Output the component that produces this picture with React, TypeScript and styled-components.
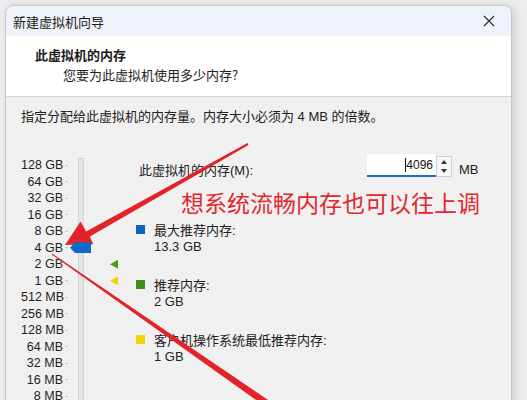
import styled, { createGlobalStyle } from "styled-components";

const GlobalStyle = createGlobalStyle`
  html, body {
    margin: 0;
    padding: 0;
    background: #ededed;
    overflow: hidden;
  }
  body {
    font-family: "Liberation Sans", "Noto Sans CJK SC", sans-serif;
    color: #1b1b1b;
  }
`;

const scaleLabels = [
  "128 GB",
  "64 GB",
  "32 GB",
  "16 GB",
  "8 GB",
  "4 GB",
  "2 GB",
  "1 GB",
  "512 MB",
  "256 MB",
  "128 MB",
  "64 MB",
  "32 MB",
  "16 MB",
  "8 MB",
];

const recommendations = [
  { color: "#0b65b8", label: "最大推荐内存:", value: "13.3 GB" },
  { color: "#3f8f1f", label: "推荐内存:", value: "2 GB" },
  { color: "#f5d400", label: "客户机操作系统最低推荐内存:", value: "1 GB" },
];

const App = () => {
  return (
    <>
      <GlobalStyle />
      <Page>
        <Window>
          <TitleBar>
            <Title>新建虚拟机向导</Title>
            <CloseButton aria-label="关闭">
              <svg width="12" height="12" viewBox="0 0 12 12">
                <path d="M1 1 L11 11 M11 1 L1 11" stroke="#2a2a2a" strokeWidth="1.1" />
              </svg>
            </CloseButton>
          </TitleBar>
          <Header>
            <HeaderTitle>此虚拟机的内存</HeaderTitle>
            <HeaderSub>您要为此虚拟机使用多少内存?</HeaderSub>
          </Header>
          <Panel>
            <Instruction>指定分配给此虚拟机的内存量。内存大小必须为 4 MB 的倍数。</Instruction>
            <Body>
              <Scale>
                {scaleLabels.map((l, i) => (
                  <ScaleLabel key={l} style={{ gridRow: i + 1 }}>
                    {l}
                  </ScaleLabel>
                ))}
                {scaleLabels.map((l, i) => (
                  <Tick key={"t" + l} style={{ gridRow: i + 1 }} />
                ))}
                <Track />
                <Thumb />
                <Marker $color="#4a9a24" $row={7} />
                <Marker $color="#f2d200" $row={8} />
              </Scale>
              <Info>
                <InputRow>
                  <FieldLabel>此虚拟机的内存(M):</FieldLabel>
                  <SpinBox>
                    <NumberField>
                      <Caret />
                      4096
                    </NumberField>
                    <Spinner>
                      <SpinHalf>
                        <Arrow $up />
                      </SpinHalf>
                      <SpinHalf>
                        <Arrow />
                      </SpinHalf>
                    </Spinner>
                  </SpinBox>
                  <Unit>MB</Unit>
                </InputRow>
                <Annotation>想系统流畅内存也可以往上调</Annotation>
                {recommendations.map((r) => (
                  <Entry key={r.label}>
                    <EntryHead>
                      <Swatch $color={r.color} />
                      <EntryLabel>{r.label}</EntryLabel>
                    </EntryHead>
                    <EntryValue>{r.value}</EntryValue>
                  </Entry>
                ))}
              </Info>
            </Body>
          </Panel>
        </Window>
        <Overlay width="527" height="400" viewBox="0 0 527 400">
          <polygon
            points="65,245 80.6,221.5 86.1,231.5 247.5,143.1 248.5,144.9 89.9,236.5 93.2,244.3"
            fill="#e3232b"
          />
          <polygon points="51.7,254.4 52.3,253.6 277,406 273,412" fill="#e3232b" />
        </Overlay>
      </Page>
    </>
  );
};

const Page = styled.div`
  position: relative;
  width: 527px;
  height: 400px;
  overflow: hidden;
  padding: 5px 0 0 5px;
  box-sizing: border-box;
`;

const Window = styled.div`
  width: 507px;
  height: 420px;
  box-sizing: border-box;
  border: 1px solid #c6c6c6;
  border-radius: 8px 8px 0 0;
  overflow: hidden;
  background: #f0f0f0;
  box-shadow: 3px 0 8px rgba(0, 0, 0, 0.12);
`;

const TitleBar = styled.div`
  height: 30px;
  display: flex;
  align-items: center;
  justify-content: space-between;
  padding: 0 8px 0 7px;
  background: #eef3f9;
`;

const Title = styled.div`
  font-family: "Noto Sans CJK SC", sans-serif;
  font-size: 13px;
  color: #1a1a1a;
`;

const CloseButton = styled.div`
  width: 24px;
  height: 24px;
  display: flex;
  align-items: center;
  justify-content: center;
  margin-right: 2px;
`;

const Header = styled.div`
  height: 61px;
  box-sizing: border-box;
  background: #ffffff;
  border-bottom: 1px solid #d6d6d6;
  padding: 10px 0 0 29px;
`;

const HeaderTitle = styled.div`
  font-family: "Noto Sans CJK SC", sans-serif;
  font-size: 13px;
  font-weight: bold;
  line-height: 17px;
`;

const HeaderSub = styled.div`
  font-family: "Noto Sans CJK SC", sans-serif;
  font-size: 13px;
  line-height: 17px;
  margin: 3px 0 0 28px;
  color: #222;
`;

const Panel = styled.div`
  padding: 11px 0 0 15px;
`;

const Instruction = styled.div`
  font-size: 13px;
  line-height: 17px;
  color: #222;
`;

const Body = styled.div`
  display: flex;
  align-items: flex-start;
  margin-top: 29px;
`;

const Scale = styled.div`
  display: grid;
  grid-template-columns: 42px 7px 21px 19px 8px;
  grid-auto-rows: 16.5px;
  margin-top: 3px;
`;

const ScaleLabel = styled.div`
  grid-column: 1;
  text-align: right;
  font-size: 12.5px;
  line-height: 16.5px;
  color: #1e1e1e;
  white-space: nowrap;
`;

const Tick = styled.div`
  grid-column: 2;
  align-self: center;
  justify-self: center;
  width: 3px;
  height: 1px;
  background: #c9c9c9;
`;

const Track = styled.div`
  grid-column: 3;
  grid-row: 1 / 17;
  justify-self: center;
  width: 4px;
  margin-top: 1px;
  background: #e4e4e4;
  border: 1px solid #d3d3d3;
  border-bottom: none;
`;

const Thumb = styled.div`
  grid-column: 3;
  grid-row: 6;
  align-self: center;
  width: 21px;
  height: 11px;
  background: #0b6bc6;
  clip-path: polygon(0 50%, 25% 0, 100% 0, 100% 100%, 25% 100%);
  z-index: 1;
`;

const Marker = styled.div<{ $color: string; $row: number }>`
  grid-column: 5;
  grid-row: ${(p) => p.$row};
  align-self: center;
  width: 8px;
  height: 9px;
  background: ${(p) => p.$color};
  clip-path: polygon(0 50%, 100% 0, 100% 100%);
`;

const Info = styled.div`
  margin-left: 18px;
  display: flex;
  flex-direction: column;
`;

const InputRow = styled.div`
  display: flex;
  align-items: center;
  height: 30px;
`;

const FieldLabel = styled.div`
  width: 228px;
  margin-left: 3px;
  font-size: 13px;
  color: #222;
`;

const SpinBox = styled.div`
  display: flex;
  align-self: flex-start;
  height: 23px;
`;

const NumberField = styled.div`
  width: 69px;
  box-sizing: border-box;
  background: #ffffff;
  border-bottom: 2px solid #1a6dc6;
  display: flex;
  align-items: center;
  justify-content: flex-end;
  padding-right: 3px;
  font-size: 12px;
  color: #111;
`;

const Caret = styled.span`
  display: inline-block;
  width: 1px;
  height: 14px;
  background: #111;
  margin-right: 0;
`;

const Spinner = styled.div`
  width: 16px;
  margin-top: 2px;
  height: 21px;
  box-sizing: border-box;
  border: 1px solid #cfcfcf;
  background: #f7f7f7;
  display: flex;
  flex-direction: column;
`;

const SpinHalf = styled.div`
  flex: 1;
  display: flex;
  align-items: center;
  justify-content: center;
`;

const Arrow = styled.div<{ $up?: boolean }>`
  width: 0;
  height: 0;
  border-left: 3px solid transparent;
  border-right: 3px solid transparent;
  ${(p) => (p.$up ? "border-bottom: 4px solid #333;" : "border-top: 4px solid #333;")}
`;

const Unit = styled.div`
  margin-left: 7px;
  font-size: 13px;
  color: #222;
`;

const Annotation = styled.div`
  font-family: "Noto Sans CJK SC", sans-serif;
  font-size: 23px;
  line-height: 36px;
  color: #e1282e;
  margin-left: 45px;
  white-space: nowrap;
`;

const Entry = styled.div`
  margin-top: 1px;
  margin-bottom: 20px;
`;

const EntryHead = styled.div`
  display: flex;
  align-items: center;
  height: 17px;
`;

const Swatch = styled.div<{ $color: string }>`
  width: 9px;
  height: 9px;
  background: ${(p) => p.$color};
  margin-right: 9px;
`;

const EntryLabel = styled.div`
  font-size: 13px;
  color: #222;
  white-space: nowrap;
`;

const EntryValue = styled.div`
  margin-left: 18px;
  font-size: 13px;
  line-height: 17px;
  color: #222;
`;

const Overlay = styled.svg`
  position: absolute;
  left: 0;
  top: 0;
  pointer-events: none;
`;

export default App;
